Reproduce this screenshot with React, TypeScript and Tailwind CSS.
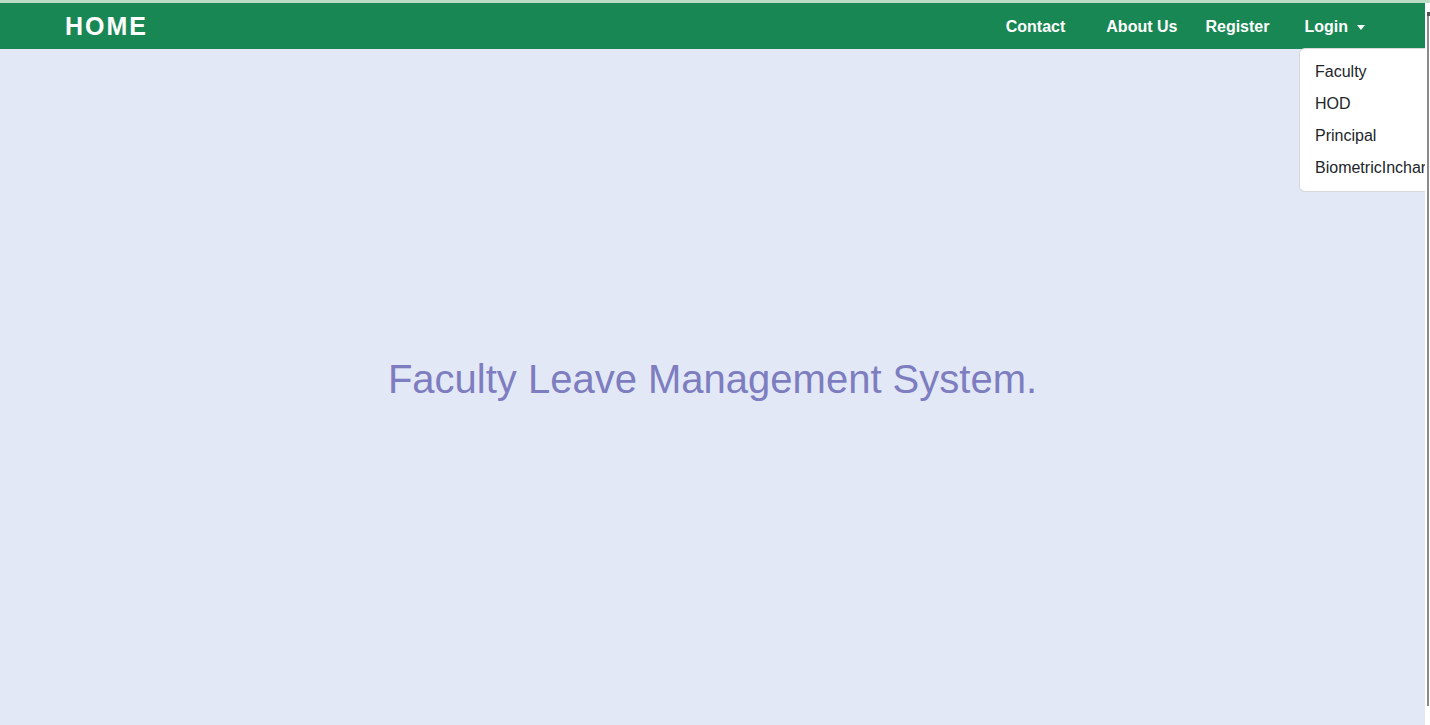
const loginItems = ["Faculty", "HOD", "Principal", "BiometricIncharge"];

export default function App() {
    return (
        <div className="h-[725px] w-[1430px] flex flex-col overflow-hidden bg-white font-['Liberation_Sans',Arial,sans-serif]">
            <div className="h-[3px] bg-[#bcdcc8] shrink-0"></div>
            <div className="flex flex-1 min-h-0">
                <div className="relative w-[1425px] flex flex-col overflow-hidden bg-[#e2e8f6]">
                    <nav className="h-[46px] bg-[#198754] flex items-center justify-between pl-[65px] shrink-0">
                        <span className="text-white font-bold text-[25px] tracking-[2px] leading-none">HOME</span>
                        <div className="flex items-center h-full pt-[2px] text-white font-bold text-[16px]">
                            <a className="mr-[41px]">Contact</a>
                            <a className="mr-[28px]">About Us</a>
                            <a className="mr-[35px]">Register</a>
                            <a className="flex items-center mr-[60px]">
                                Login
                                <span className="ml-[9px] w-0 h-0 border-l-[4px] border-r-[4px] border-t-[5px] border-l-transparent border-r-transparent border-t-white"></span>
                            </a>
                        </div>
                    </nav>
                    <div className="flex-1 flex items-start justify-center pt-[306px]">
                        <h1 className="text-[40px] leading-[48px] text-[#7d7dc0]">Faculty Leave Management System.</h1>
                    </div>
                    <div className="absolute left-[1299px] top-[45px] w-[170px] bg-white border border-black/15 rounded-[6px] pt-[7px] pb-[7px] text-[16px] text-[#212529]">
                        {loginItems.map((item) => (
                            <div key={item} className="px-[15px] py-[4px] leading-[24px] whitespace-nowrap">{item}</div>
                        ))}
                    </div>
                </div>
                <div className="w-[5px] bg-white relative">
                    <div className="absolute left-[2px] top-[9px] h-[4px] w-[3px] bg-[#555]"></div>
                    <div className="absolute left-[2px] top-[13px] h-[690px] w-[2px] bg-[#8a8a8a]"></div>
                </div>
            </div>
        </div>
    );
}
